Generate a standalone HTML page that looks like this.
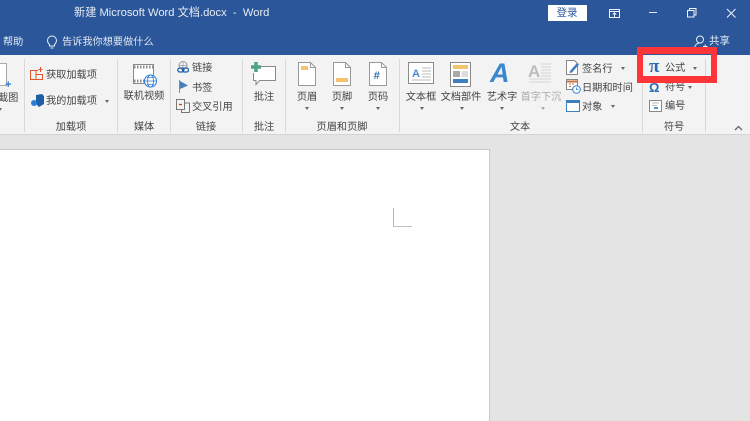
<!DOCTYPE html>
<html lang="zh">
<head>
<meta charset="utf-8">
<style>
html,body{margin:0;padding:0}
body{width:750px;height:421px;overflow:hidden;position:relative;background:#e4e4e4;font-family:"Liberation Sans","Noto Sans CJK SC",sans-serif}
.a{position:absolute}
.t{position:absolute;white-space:nowrap;font-size:10.2px;line-height:14px;color:#444;margin-top:3px}
.c{transform:translateX(-50%)}
.w{color:#fff}
.sep{position:absolute;top:59px;height:73px;width:1px;background:#d8d8d8}
.ar{position:absolute;width:0;height:0;border-left:2.5px solid transparent;border-right:2.5px solid transparent;border-top:3px solid #666}
svg{position:absolute;overflow:visible}
</style>
</head>
<body>
<!-- Title bar -->
<div class="a" style="left:0;top:0;width:750px;height:55px;background:#2b579a"></div>
<div class="t w" style="left:74px;top:3px;font-size:11.2px;color:#e6ecf5">新建 Microsoft Word 文档.docx &nbsp;- &nbsp;Word</div>
<div class="t w" style="left:3px;top:33px;color:#e6ecf5">帮助</div>
<svg style="left:46px;top:35px" width="12" height="15" viewBox="0 0 12 15" fill="none" stroke="#e6ecf5" stroke-width="1"><path d="M3.5 9.5C2 8 1.5 7 1.5 5.5a4.5 4.5 0 0 1 9 0C10.500 7 10 8 8.500 9.500V11h-5zM4.500 13h3"/></svg>
<div class="t" style="left:62px;top:33px;color:#dfe6f1">告诉我你想要做什么</div>
<div class="a" style="left:548px;top:5px;width:39px;height:16px;background:#fff"></div>
<div class="t c" style="left:567px;top:3px;color:#2b579a;font-size:10.500px">登录</div>
<svg style="left:608px;top:8px" width="13" height="11" viewBox="0 0 13 11" fill="none" stroke="#f0f3f8"><path d="M1.500 1.500h10v8h-10zM1.500 3.500h10M6.500 9V5M4.800 6.500l1.700-1.700 1.700 1.700"/></svg>
<div class="a" style="left:649px;top:12px;width:8px;height:1px;background:#dfe6f1"></div>
<svg style="left:687px;top:8px" width="10" height="10" viewBox="0 0 10 10" fill="none" stroke="#f0f3f8"><path d="M.5 2.500h6.500v6.500H.5zM2.500 2.500V.5H9V7H7"/></svg>
<svg style="left:726px;top:8px" width="11" height="11" viewBox="0 0 11 11" fill="none" stroke="#f0f3f8"><path d="M1 1l8.500 8.500M9.500 1L1 9.500"/></svg>
<svg style="left:694px;top:35px" width="14" height="14" viewBox="0 0 14 14" fill="none" stroke="#e6ecf5"><circle cx="6" cy="4.500" r="3.500"/><path d="M.5 13c.5-3 2.500-5 5.500-5M9 11.500h4.500M11.200 9.500v4"/></svg>
<div class="t" style="left:709px;top:31px;font-size:10.500px;color:#e6ecf5">共享</div>

<!-- Ribbon -->
<div class="a" style="left:0;top:55px;width:750px;height:79px;background:#f3f3f3"></div>
<div class="a" style="left:0;top:134px;width:750px;height:1px;background:#d4d4d4"></div>
<div class="sep" style="left:24px"></div>
<div class="sep" style="left:117px"></div>
<div class="sep" style="left:170px"></div>
<div class="sep" style="left:242px"></div>
<div class="sep" style="left:285px"></div>
<div class="sep" style="left:399px"></div>
<div class="sep" style="left:642px"></div>
<div class="sep" style="left:705px"></div>

<!-- Screenshot partial -->
<div class="a" style="left:0;top:63px;width:7px;height:23px;background:#fff;border:1px solid #aaa;border-left:0;box-sizing:border-box"></div>
<div class="t" style="left:5px;top:77px;color:#2b7cd3;font-size:11px;font-weight:bold;line-height:11px">+</div>
<div class="t" style="left:-2px;top:89px">截图</div>
<div class="ar" style="left:-2px;top:108px"></div>

<!-- Add-ins -->
<svg style="left:30px;top:67px" width="13" height="13" viewBox="0 0 13 13" fill="none" stroke="#e0562b"><path d="M.5 3.500h5.500v9H.5zM6 7.500h6.500v5H6zM6 3.500h2M10.500 0v5M8.500 2.500h4"/></svg>
<div class="t" style="left:46px;top:66px;color:#444">获取加载项</div>
<svg style="left:31px;top:94px" width="13" height="13" viewBox="0 0 13 13"><path d="M5 1l6-1 2 2v8l-5 3-3-3z" fill="#1e5fa8"/><circle cx="3" cy="9" r="3" fill="#2b7cd3"/></svg>
<div class="t" style="left:46px;top:92px">我的加载项</div>
<div class="ar" style="left:105px;top:100px"></div>
<div class="t c" style="left:71px;top:118px">加载项</div>

<!-- Media -->
<svg style="left:133px;top:64px" width="32" height="28" viewBox="0 0 32 28" fill="none"><rect x=".5" y=".5" width="20" height="19" fill="#fff" stroke="#8a8a8a"/><path d="M1 3h19M1 17h19" stroke="#8a8a8a" stroke-width="3" stroke-dasharray="1.500 1.500"/><circle cx="17.500" cy="17" r="6" fill="#fff" stroke="#2b7cd3"/><path d="M11.500 17h12M14 13.500h7M14 20.500h7" stroke="#2b7cd3" stroke-width=".8"/><ellipse cx="17.500" cy="17" rx="3" ry="6" stroke="#2b7cd3" stroke-width=".8"/></svg>
<div class="t c" style="left:144px;top:87px">联机视频</div>
<div class="t c" style="left:144px;top:118px">媒体</div>

<!-- Links -->
<svg style="left:177px;top:61px" width="13" height="13" viewBox="0 0 13 13" fill="none"><circle cx="6" cy="4.500" r="4" stroke="#999"/><path d="M2 4.500h8M6 .5v8" stroke="#999" stroke-width=".7"/><rect x=".8" y="7" width="6" height="4" rx="2" stroke="#1e5fa8" stroke-width="1.300"/><rect x="5.500" y="7" width="6" height="4" rx="2" stroke="#1e5fa8" stroke-width="1.300"/></svg>
<div class="t" style="left:192px;top:59px">链接</div>
<svg style="left:179px;top:80px" width="10" height="13" viewBox="0 0 10 13"><path d="M.5 0v13" stroke="#888"/><path d="M1 1l8 4.500L1 9z" fill="#4a7ebb"/></svg>
<div class="t" style="left:192px;top:79px">书签</div>
<svg style="left:176px;top:99px" width="14" height="14" viewBox="0 0 14 14" fill="none" stroke="#777"><path d="M.5.500h8v10h-8zM8.500 4h5v9.500h-8v-3"/><path d="M3 5.500h3" stroke="#d83b01" stroke-width="1.300"/></svg>
<div class="t" style="left:192px;top:98px">交叉引用</div>
<div class="t c" style="left:206px;top:118px">链接</div>

<!-- Comment -->
<svg style="left:250px;top:61px" width="27" height="25" viewBox="0 0 27 25" fill="none"><path d="M8 5.500h17.500v14h-16l-3.500 4v-4H3.500V12" fill="#fff" stroke="#8a8a8a"/><path d="M6 1v10M1 6h10" stroke="#4ca38a" stroke-width="3.500"/></svg>
<div class="t c" style="left:264px;top:88px">批注</div>
<div class="t c" style="left:264px;top:118px">批注</div>

<!-- Header / footer -->
<svg style="left:298px;top:62px" width="18" height="24" viewBox="0 0 18 24"><path d="M.5.500h12l5 5v18H.5z" fill="#fff" stroke="#999"/><path d="M12.500.5v5h5" fill="none" stroke="#999"/><rect x="3" y="4" width="7" height="4" fill="#f2c46d"/></svg>
<div class="t c" style="left:307px;top:88px">页眉</div>
<div class="ar" style="left:305px;top:107px"></div>
<svg style="left:333px;top:62px" width="18" height="24" viewBox="0 0 18 24"><path d="M.5.500h12l5 5v18H.5z" fill="#fff" stroke="#999"/><path d="M12.500.5v5h5" fill="none" stroke="#999"/><rect x="3" y="16" width="12" height="4" fill="#f2c46d"/></svg>
<div class="t c" style="left:342px;top:88px">页脚</div>
<div class="ar" style="left:340px;top:107px"></div>
<svg style="left:369px;top:62px" width="18" height="24" viewBox="0 0 18 24"><path d="M.5.500h12l5 5v18H.5z" fill="#fff" stroke="#999"/><path d="M12.500.5v5h5" fill="none" stroke="#999"/><text x="4.500" y="17" font-size="11" font-weight="bold" font-style="italic" fill="#2b6cb5" font-family="Liberation Sans">#</text></svg>
<div class="t c" style="left:378px;top:88px">页码</div>
<div class="ar" style="left:376px;top:107px"></div>
<div class="t c" style="left:342px;top:118px">页眉和页脚</div>

<!-- Text group -->
<svg style="left:408px;top:62px" width="26" height="23" viewBox="0 0 26 23"><rect x=".5" y=".5" width="25" height="21" fill="#fff" stroke="#8a8a8a"/><text x="4" y="15" font-size="11" font-weight="bold" fill="#4a8bd0" font-family="Liberation Sans">A</text><path d="M14 6h9M14 9h9M14 12h9M14 15h9M4 18h19" stroke="#bbb"/></svg>
<div class="t c" style="left:421px;top:88px">文本框</div>
<div class="ar" style="left:420px;top:107px"></div>
<svg style="left:450px;top:62px" width="21" height="25" viewBox="0 0 21 25"><rect x=".5" y=".5" width="20" height="24" fill="#fff" stroke="#8a8a8a"/><rect x="3" y="3" width="15" height="4" fill="#f2c46d"/><rect x="3" y="9" width="7" height="6" fill="#aaa"/><path d="M11.500 10h6.500M11.500 12h6.500M11.500 14h6.500" stroke="#bbb"/><rect x="3" y="17" width="15" height="4" fill="#3f7ebf"/></svg>
<div class="t c" style="left:461px;top:88px">文档部件</div>
<div class="ar" style="left:460px;top:107px"></div>
<div class="t" style="left:490px;top:55px;font-size:27px;line-height:30px;font-style:italic;font-weight:bold;color:#3c86cc">A</div>
<div class="t c" style="left:502px;top:88px">艺术字</div>
<div class="ar" style="left:500px;top:107px"></div>
<svg style="left:528px;top:62px" width="26" height="24" viewBox="0 0 26 24"><text x="0" y="15" font-size="17" font-weight="bold" fill="#bdbdbd" font-family="Liberation Sans">A</text><path d="M13 2h10M13 5h10M13 8h10M13 11h10M13 14h10M1 17h22M1 20h22" stroke="#d4d4d4"/></svg>
<div class="t c" style="left:541px;top:88px;color:#aaa">首字下沉</div>
<div class="ar" style="left:541px;top:107px;border-top-color:#aaa"></div>
<svg style="left:566px;top:60px" width="14" height="15" viewBox="0 0 14 15"><path d="M.5.500h8l3 3v11H.5z" fill="#fff" stroke="#888"/><path d="M4 11l7-8 2 1.500-7 8-2.500.5z" fill="#3f7ebf"/></svg>
<div class="t" style="left:582px;top:60px">签名行</div>
<div class="ar" style="left:621px;top:67px"></div>
<svg style="left:566px;top:79px" width="15" height="15" viewBox="0 0 15 15" fill="none"><rect x=".5" y=".5" width="11" height="10" fill="#fff" stroke="#888"/><path d="M1 2.500h10" stroke="#c8703a" stroke-width="2"/><path d="M3 5h2M6 5h2M3 7.500h2" stroke="#c8703a"/><circle cx="10.500" cy="10.500" r="3.800" fill="#fff" stroke="#2b7cd3"/><path d="M10.500 8.500v2h2" stroke="#2b7cd3" stroke-width=".8"/></svg>
<div class="t" style="left:582px;top:79px">日期和时间</div>
<svg style="left:566px;top:100px" width="14" height="12" viewBox="0 0 14 12"><rect x=".5" y=".5" width="13" height="11" fill="#fff" stroke="#3f7ebf"/><rect x="1" y="1" width="12" height="2" fill="#3f7ebf"/></svg>
<div class="t" style="left:582px;top:98px">对象</div>
<div class="ar" style="left:611px;top:105px"></div>
<div class="t c" style="left:520px;top:118px">文本</div>

<!-- Symbols -->
<div class="t" style="left:649px;top:54px;font-size:19px;line-height:20px;font-weight:bold;color:#2b6cb5;font-family:'Liberation Serif',serif">π</div>
<div class="t" style="left:665px;top:59px">公式</div>
<div class="ar" style="left:693px;top:67px"></div>
<div class="t" style="left:649px;top:77px;font-size:13px;line-height:15px;font-weight:bold;color:#2b6cb5">Ω</div>
<div class="t" style="left:665px;top:78px">符号</div>
<div class="ar" style="left:688px;top:86px"></div>
<svg style="left:649px;top:100px" width="13" height="12" viewBox="0 0 13 12"><rect x=".5" y=".5" width="12" height="11" fill="#fff" stroke="#888"/><path d="M3 3h7M3 5.500h5" stroke="#bbb"/><path d="M5 8h4" stroke="#2b6cb5" stroke-width="1.500"/></svg>
<div class="t" style="left:665px;top:97px">编号</div>
<div class="t c" style="left:674px;top:118px">符号</div>
<svg style="left:734px;top:125px" width="9" height="6" viewBox="0 0 9 6" fill="none" stroke="#666" stroke-width="1.300"><path d="M1 5l3.500-3.500L8 5"/></svg>

<!-- Highlight box -->
<div class="a" style="left:637px;top:47px;width:80px;height:36px;box-sizing:border-box;border:6px solid #fd3438;border-top-width:7px;border-bottom-width:7px"></div>

<!-- Document -->
<div class="a" style="left:0;top:149px;width:490px;height:272px;background:#fff;border-top:1px solid #c8c8c8;border-right:1px solid #c8c8c8;box-sizing:border-box"></div>
<div class="a" style="left:393px;top:208px;width:1px;height:19px;background:#b5b5b5"></div>
<div class="a" style="left:393px;top:226px;width:19px;height:1px;background:#c0c0c0"></div>
</body>
</html>
